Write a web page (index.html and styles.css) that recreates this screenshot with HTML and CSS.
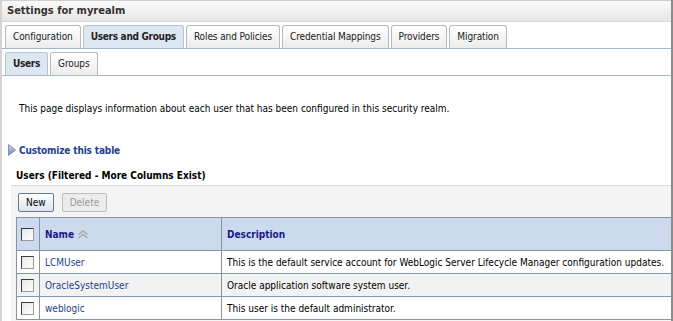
FILE: index.html
```html
<!DOCTYPE html>
<html>
<head>
<meta charset="utf-8">
<link rel="stylesheet" href="styles.css">
</head>
<body>
<div class="frame">
  <div class="titlebar">Settings for myrealm</div>
  <div class="tabs">
    <div class="tab">Configuration</div>
    <div class="tab active">Users and Groups</div>
    <div class="tab">Roles and Policies</div>
    <div class="tab">Credential Mappings</div>
    <div class="tab">Providers</div>
    <div class="tab">Migration</div>
  </div>
  <div class="tabs sub">
    <div class="tab active">Users</div>
    <div class="tab">Groups</div>
  </div>
  <p class="intro">This page displays information about each user that has been configured in this security realm.</p>
  <div class="customize">
    <svg class="tri" width="8" height="12" viewBox="0 0 8 12">
      <defs><linearGradient id="g" x1="0" y1="0" x2="0" y2="1"><stop offset="0" stop-color="#c9d6ea"/><stop offset="1" stop-color="#6f86b3"/></linearGradient></defs>
      <polygon points="0.5,0.5 7.5,6 0.5,11.5" fill="url(#g)" stroke="#7f93bb" stroke-width="1"/>
    </svg>
    <span class="link bold tight">Customize this table</span>
  </div>
  <div class="caption">Users (Filtered - More Columns Exist)</div>
  <div class="tablebox">
    <div class="buttons">
      <button class="btn">New</button>
      <button class="btn disabled">Delete</button>
    </div>
    <table class="grid">
      <colgroup><col class="c1"><col class="c2"><col></colgroup>
      <thead>
        <tr>
          <th><span class="cb"></span></th>
          <th>Name <svg class="sort" width="12" height="9" viewBox="0 0 12 9"><path d="M1.5 4.5 L6 1 L10.5 4.5 M1.5 8 L6 4.5 L10.5 8" fill="none" stroke="#a7a7a7" stroke-width="1.4"/></svg></th>
          <th>Description</th>
        </tr>
      </thead>
      <tbody>
        <tr><td><span class="cb"></span></td><td class="link">LCMUser</td><td>This is the default service account for WebLogic Server Lifecycle Manager configuration updates.</td></tr>
        <tr class="alt"><td><span class="cb"></span></td><td class="link">OracleSystemUser</td><td>Oracle application software system user.</td></tr>
        <tr><td><span class="cb"></span></td><td class="link">weblogic</td><td>This user is the default administrator.</td></tr>
      </tbody>
    </table>
  </div>
</div>
</body>
</html>
```

FILE: styles.css
```css
html, body {
  margin: 0;
  padding: 0;
  background: #fff;
}
body {
  font-family: "DejaVu Sans Condensed", "DejaVu Sans", sans-serif;
  font-size: 10px;
  color: #000;
}
.frame {
  height: 321px;
  border-left: 2px solid #d4d4d4;
  border-right: 2px solid #8c8c8c;
  overflow: hidden;
}
.titlebar {
  height: 20px;
  line-height: 20px;
  padding-left: 5px;
  font-size: 11px;
  font-weight: bold;
  color: #333;
  background: linear-gradient(#fafafa, #e6e6e6);
  border-top: 1px solid #cfcfcf;
  border-bottom: 1px solid #d8d8d8;
}
.tabs {
  display: flex;
  gap: 2px;
  padding: 3px 0 0 3px;
  border-bottom: 1px solid #a5b7c9;
}
.tabs.sub {
  padding-top: 3px;
}
.tab {
  height: 22px;
  line-height: 22px;
  padding: 0 7px;
  border: 1px solid #b9b9b9;
  border-bottom: none;
  border-radius: 3px 3px 0 0;
  background: linear-gradient(#ffffff, #ececec);
  color: #222;
  letter-spacing: -0.1px;
}
.tab.active {
  background: #dde7f2;
  border-color: #b4c4d6;
  font-weight: bold;
  letter-spacing: -0.3px;
}
.intro {
  margin: 26px 0 0 17px;
  line-height: 14px;
}
.customize {
  display: flex;
  align-items: center;
  gap: 3px;
  margin: 27px 0 0 6px;
  height: 14px;
}
.tri { display: block; }
.link { color: #1e3f8f; }
.bold { font-weight: bold; }
.tight { letter-spacing: -0.15px; }
.caption {
  margin: 12px 0 0 14px;
  font-weight: bold;
  height: 14px;
  line-height: 14px;
}
.tablebox {
  margin: 2px 0 0 9px;
  padding: 7px 0 0 5px;
  background: #f4f4f4;
  border-top: 1px solid #d6d6d6;
  height: 200px;
}
.buttons {
  display: flex;
  gap: 8px;
  padding-left: 2px;
}
.btn {
  font-family: inherit;
  font-size: 10px;
  height: 19px;
  padding: 0 7px;
  border: 1px solid #6a7a8e;
  border-radius: 2px;
  background: linear-gradient(#ffffff, #dde4ee);
  color: #000;
}
.btn.disabled {
  border-color: #bdbdbd;
  background: #ececec;
  color: #9a9a9a;
}
.grid {
  margin-top: 5px;
  width: calc(100% + 2px);
  table-layout: fixed;
  border-collapse: collapse;
  background: #fff;
}
.c1 { width: 23px; }
.c2 { width: 182px; }
.grid th, .grid td {
  border: 1px solid #8595a8;
  text-align: left;
  padding: 0 5px;
  white-space: nowrap;
  overflow: hidden;
}
.grid th {
  height: 32px;
  background: #ccdaee;
  color: #1a1a86;
  font-weight: bold;
}
.grid td {
  height: 22px;
}
.grid th:first-child, .grid td:first-child {
  padding: 0 0 0 4px;
}
.grid tr.alt td {
  background: #f2f2f2;
}
.sort { vertical-align: -1px; }
.cb {
  display: block;
  width: 11px;
  height: 11px;
  border: 1px solid #3c3c3c;
  border-right-color: #9a9a9a;
  border-bottom-color: #9a9a9a;
  background: linear-gradient(135deg, #e6e6e6, #ffffff);
}
```
